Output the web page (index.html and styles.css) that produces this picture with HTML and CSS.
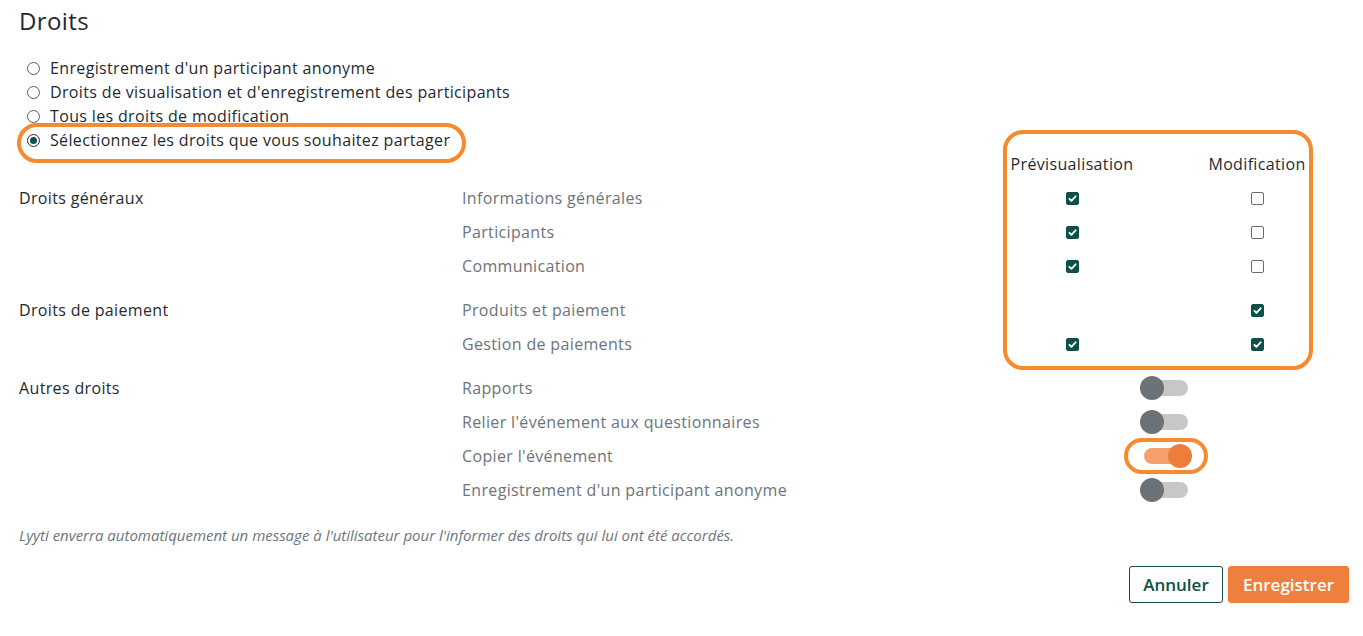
FILE: index.html
```html
<!DOCTYPE html>
<html lang="fr">
<head>
<meta charset="utf-8">
<title>Droits</title>
<link rel="stylesheet" href="styles.css">
</head>
<body>
<div class="page">
  <h1 class="title">Droits</h1>

  <div class="radio-list">
    <label class="radio-row"><span class="radio"></span><span>Enregistrement d'un participant anonyme</span></label>
    <label class="radio-row"><span class="radio"></span><span>Droits de visualisation et d'enregistrement des participants</span></label>
    <label class="radio-row"><span class="radio"></span><span>Tous les droits de modification</span></label>
    <label class="radio-row highlighted"><span class="radio checked"></span><span>Sélectionnez les droits que vous souhaitez partager</span></label>
  </div>

  <div class="rights-wrap">
    <div class="frame-layer">
      <div class="matrix-frame"></div>
    </div>

    <div class="rights-grid">
      <div class="cell"></div>
      <div class="cell"></div>
      <div class="cell col-head">Prévisualisation</div>
      <div class="cell"></div>
      <div class="cell col-head">Modification</div>

      <div class="cell section">Droits généraux</div>
      <div class="cell item">Informations générales</div>
      <div class="cell center"><span class="cb on"><svg viewBox="0 0 11 11"><path d="M2.4 5.8l2 2 4.2-4.5" /></svg></span></div>
      <div class="cell"></div>
      <div class="cell center"><span class="cb"></span></div>

      <div class="cell"></div>
      <div class="cell item">Participants</div>
      <div class="cell center"><span class="cb on"><svg viewBox="0 0 11 11"><path d="M2.4 5.8l2 2 4.2-4.5" /></svg></span></div>
      <div class="cell"></div>
      <div class="cell center"><span class="cb"></span></div>

      <div class="cell"></div>
      <div class="cell item">Communication</div>
      <div class="cell center"><span class="cb on"><svg viewBox="0 0 11 11"><path d="M2.4 5.8l2 2 4.2-4.5" /></svg></span></div>
      <div class="cell"></div>
      <div class="cell center"><span class="cb"></span></div>

      <div class="spacer"></div>

      <div class="cell section">Droits de paiement</div>
      <div class="cell item">Produits et paiement</div>
      <div class="cell"></div>
      <div class="cell"></div>
      <div class="cell center"><span class="cb on"><svg viewBox="0 0 11 11"><path d="M2.4 5.8l2 2 4.2-4.5" /></svg></span></div>

      <div class="cell"></div>
      <div class="cell item">Gestion de paiements</div>
      <div class="cell center"><span class="cb on"><svg viewBox="0 0 11 11"><path d="M2.4 5.8l2 2 4.2-4.5" /></svg></span></div>
      <div class="cell"></div>
      <div class="cell center"><span class="cb on"><svg viewBox="0 0 11 11"><path d="M2.4 5.8l2 2 4.2-4.5" /></svg></span></div>

      <div class="spacer"></div>

      <div class="cell section">Autres droits</div>
      <div class="cell item">Rapports</div>
      <div class="cell"></div>
      <div class="cell toggle-cell"><span class="toggle"><span class="track"></span><span class="knob"></span></span></div>
      <div class="cell"></div>

      <div class="cell"></div>
      <div class="cell item">Relier l'événement aux questionnaires</div>
      <div class="cell"></div>
      <div class="cell toggle-cell"><span class="toggle"><span class="track"></span><span class="knob"></span></span></div>
      <div class="cell"></div>

      <div class="cell"></div>
      <div class="cell item">Copier l'événement</div>
      <div class="cell"></div>
      <div class="cell toggle-cell"><span class="toggle on highlighted-toggle"><span class="track"></span><span class="knob"></span></span></div>
      <div class="cell"></div>

      <div class="cell"></div>
      <div class="cell item">Enregistrement d'un participant anonyme</div>
      <div class="cell"></div>
      <div class="cell toggle-cell"><span class="toggle"><span class="track"></span><span class="knob"></span></span></div>
      <div class="cell"></div>
    </div>
  </div>

  <p class="note">Lyyti enverra automatiquement un message à l'utilisateur pour l'informer des droits qui lui ont été accordés.</p>

  <div class="actions">
    <button class="btn btn-outline">Annuler</button>
    <button class="btn btn-primary">Enregistrer</button>
  </div>
</div>
</body>
</html>
```
FILE: styles.css
```css
* { box-sizing: border-box; }

html, body {
  margin: 0;
  padding: 0;
  background: #ffffff;
}

body {
  font-family: "Open Sans", "Lato", sans-serif;
  color: #1f2a30;
  font-size: 16px;
}

.page {
  padding: 5px 14px 0 19px;
}

.title {
  margin: 0;
  font-size: 24px;
  font-weight: 400;
  line-height: 32px;
  letter-spacing: 0.4px;
  color: #1f2a30;
}

.radio-list {
  margin-top: 19px;
  display: flex;
  flex-direction: column;
}

.radio-row {
  display: flex;
  align-items: center;
  height: 24px;
  padding-left: 8px;
  gap: 10px;
  font-size: 16px;
  letter-spacing: 0.35px;
  color: #1f2a30;
  position: relative;
  width: max-content;
}

.radio {
  width: 13px;
  height: 13px;
  border: 1px solid #555c60;
  border-radius: 50%;
  flex: none;
  display: flex;
  align-items: center;
  justify-content: center;
}

.radio.checked {
  border-color: #1f2a30;
}

.radio.checked::before {
  content: "";
  width: 7px;
  height: 7px;
  border-radius: 50%;
  background: #0c5048;
}

.highlighted::after {
  content: "";
  position: absolute;
  left: -2px;
  right: -16px;
  top: -5px;
  bottom: -11px;
  border: 4px solid #f68a2e;
  border-radius: 20px;
  pointer-events: none;
}

.rights-wrap {
  display: grid;
}

.rights-wrap > .frame-layer,
.rights-wrap > .rights-grid {
  grid-area: 1 / 1;
}

.frame-layer,
.rights-grid {
  display: grid;
  grid-template-columns: 443px 546px 128px 64px 114px;
  grid-template-rows: 29px 34px 34px 34px 10px 34px 34px 10px 34px 34px 34px 34px;
}

.matrix-frame {
  grid-column: 3 / 6;
  grid-row: 1 / 8;
  margin: -22px 1px -9px -5px;
  border: 4px solid #f68a2e;
  border-radius: 20px;
}

.cell {
  display: flex;
  align-items: center;
  min-width: 0;
  white-space: nowrap;
  letter-spacing: 0.35px;
}

.col-head {
  align-items: flex-start;
  justify-content: center;
  line-height: 24px;
  font-size: 16px;
  color: #1f2a30;
}

.section {
  font-size: 16px;
  color: #1f2a30;
}

.item {
  font-size: 16px;
  color: #6c7479;
}

.center {
  justify-content: center;
}

.spacer {
  grid-column: 1 / -1;
}

.cb {
  width: 13px;
  height: 13px;
  border: 1px solid #6b6b6b;
  border-radius: 2px;
  display: block;
  background: #fff;
}

.cb.on {
  border-color: #0c5048;
  background: #0c5048;
}

.cb svg {
  display: block;
  width: 11px;
  height: 11px;
}

.cb svg path {
  fill: none;
  stroke: #ffffff;
  stroke-width: 1.9;
  stroke-linecap: round;
  stroke-linejoin: round;
}

.toggle-cell {
  padding-left: 4px;
}

.toggle {
  position: relative;
  display: block;
  width: 52px;
  height: 24px;
}

.toggle .track {
  position: absolute;
  left: 4px;
  right: 4px;
  top: 4px;
  height: 16px;
  border-radius: 8px;
  background: #c7c7c7;
}

.toggle .knob {
  position: absolute;
  left: 0;
  top: 0;
  width: 24px;
  height: 24px;
  border-radius: 50%;
  background: #6b7379;
}

.toggle.on .track {
  background: #f3a06b;
}

.toggle.on .knob {
  left: 28px;
  background: #ee7d3b;
}

.highlighted-toggle::after {
  content: "";
  position: absolute;
  left: -16px;
  right: -16px;
  top: -6px;
  bottom: -6px;
  border: 4px solid #f68a2e;
  border-radius: 20px;
}

.note {
  margin: 18px 0 0;
  font-family: "Open Sans", sans-serif;
  font-style: italic;
  font-size: 15px;
  line-height: 20px;
  color: #6c757d;
}

.actions {
  margin-top: 21px;
  display: flex;
  justify-content: flex-end;
  gap: 5px;
}

.btn {
  height: 37px;
  font-family: "Open Sans", sans-serif;
  font-size: 17px;
  font-weight: 600;
  border-radius: 3px;
  cursor: pointer;
}

.btn-outline {
  width: 94px;
  background: #ffffff;
  border: 1px solid #0c5048;
  color: #0c5048;
}

.btn-primary {
  width: 121px;
  background: #ef7f3d;
  border: 1px solid #ef7f3d;
  color: #ffffff;
  box-shadow: 0 2px 4px rgba(0, 0, 0, 0.12);
}
```
